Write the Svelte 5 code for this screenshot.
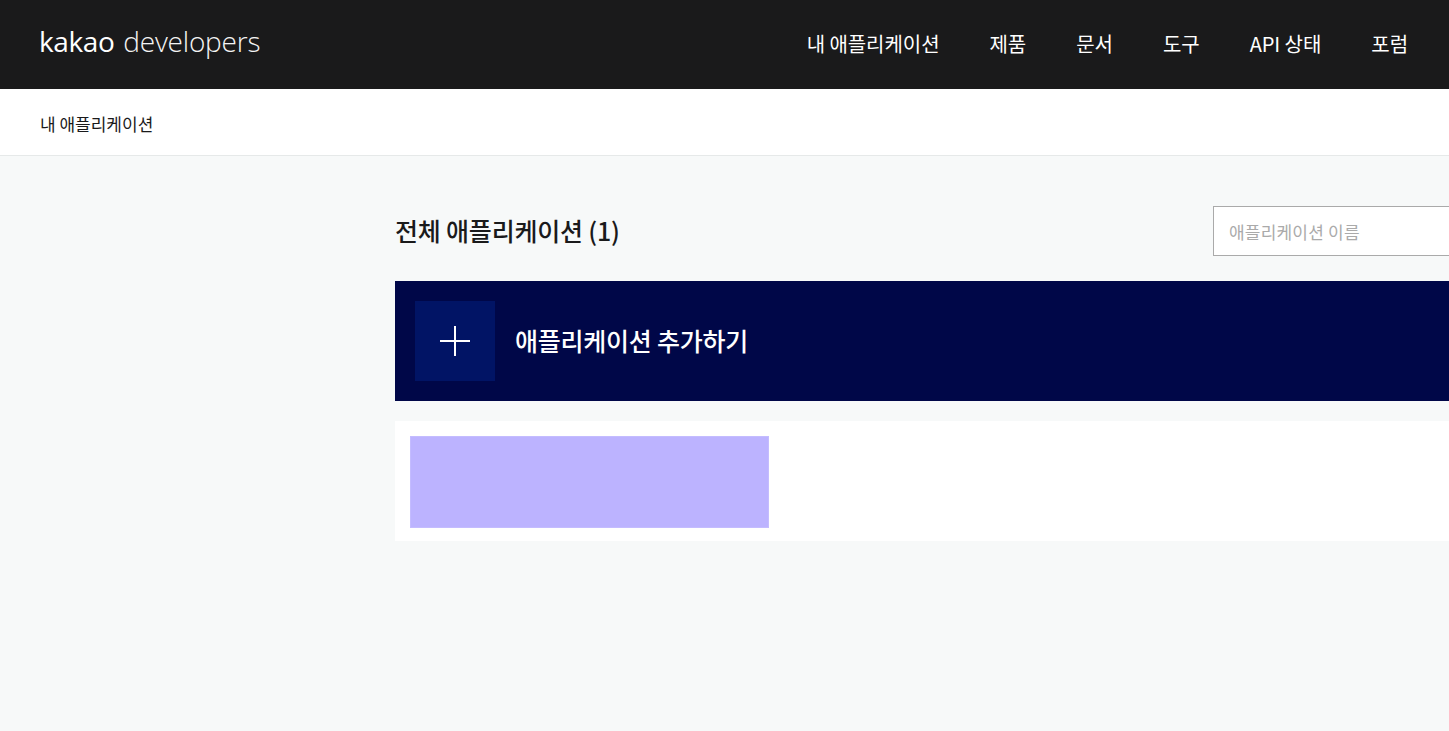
<script lang="ts">
	const navItems = ['내 애플리케이션', '제품', '문서', '도구', 'API 상태', '포럼'];
	let search = $state('');
</script>

<div class="page">
	<header class="top-bar">
		<a class="logo" href="#home"><span class="logo-brand">kakao</span> <span class="logo-sub">developers</span></a>
		<nav class="main-nav">
			{#each navItems as item}
				<a href="#{item}">{item}</a>
			{/each}
		</nav>
	</header>

	<div class="breadcrumb">내 애플리케이션</div>

	<main class="content">
		<div class="title-row">
			<h1>전체 애플리케이션 (1)</h1>
			<input type="text" placeholder="애플리케이션 이름" bind:value={search} />
		</div>

		<button type="button" class="add-app">
			<span class="add-icon">
				<svg xmlns="http://www.w3.org/2000/svg" width="30" height="30" viewBox="0 0 30 30" fill="none" stroke="#fff" stroke-width="2">
					<path d="M0 15h30" />
					<path d="M15 0v30" />
				</svg>
			</span>
			<span class="add-label">애플리케이션 추가하기</span>
		</button>

		<section class="app-list">
			<div class="app-card"></div>
		</section>
	</main>
</div>

<style>
	:global(body) {
		background-color: #f7f9f9;
	}

	.page {
		height: 731px;
		overflow: hidden;
		font-family: 'Noto Sans CJK KR', 'Noto Sans', sans-serif;
		background-color: #f7f9f9;
	}

	.top-bar {
		height: 89px;
		display: flex;
		align-items: center;
		justify-content: space-between;
		padding: 0 41px 0 39px;
		background-color: #1a1a1b;
	}

	.logo {
		font-family: 'Open Sans', sans-serif;
		font-size: 28px;
		line-height: 1;
		color: #fff;
		text-decoration: none;
		letter-spacing: -0.4px;
		word-spacing: 2px;
		margin-top: -7px;
	}

	.logo-brand {
		font-weight: 400;
	}

	.logo-sub {
		font-weight: 300;
		letter-spacing: -0.2px;
		color: #f4f4f4;
	}

	.main-nav {
		display: flex;
		gap: 50px;
		margin-top: -2px;
	}

	.main-nav a {
		font-size: 20px;
		font-weight: 400;
		letter-spacing: -0.05px;
		color: #fff;
		text-decoration: none;
	}

	.breadcrumb {
		height: 67px;
		display: flex;
		align-items: center;
		padding: 3px 0 0 40px;
		box-sizing: border-box;
		background-color: #fff;
		border-bottom: 1px solid #e6e9e9;
		font-size: 17px;
		color: #1a1a1b;
	}

	.content {
		width: 1100px;
		margin-left: 395px;
	}

	.title-row {
		display: flex;
		align-items: center;
		justify-content: space-between;
		margin-top: 50px;
		height: 50px;
	}

	h1 {
		margin: 0 0 3px;
		font-size: 25px;
		font-weight: 500;
		letter-spacing: -0.2px;
		color: #1a1a1b;
	}

	input {
		width: 282px;
		height: 50px;
		box-sizing: border-box;
		padding: 0 15px;
		border: 1px solid #aaa;
		background-color: #fff;
		font-family: inherit;
		font-size: 17px;
		outline: none;
	}

	input::placeholder {
		color: #aaa;
		letter-spacing: 0.2px;
	}

	.add-app {
		width: 100%;
		height: 120px;
		margin-top: 25px;
		padding: 20px;
		display: flex;
		align-items: center;
		gap: 20px;
		border: none;
		background-color: #000748;
		font-family: inherit;
		cursor: pointer;
	}

	.add-icon {
		width: 80px;
		height: 80px;
		display: flex;
		align-items: center;
		justify-content: center;
		background-color: #011465;
	}

	.add-label {
		margin-bottom: 2px;
		font-size: 25px;
		font-weight: 500;
		letter-spacing: -0.25px;
		color: #fff;
	}

	.app-list {
		height: 120px;
		margin-top: 20px;
		padding: 15px;
		box-sizing: border-box;
		background-color: #fff;
	}

	.app-card {
		width: 359px;
		height: 92px;
		box-sizing: border-box;
		border: 1px solid #c4bcff;
		background-color: #bcb3ff;
	}
</style>
